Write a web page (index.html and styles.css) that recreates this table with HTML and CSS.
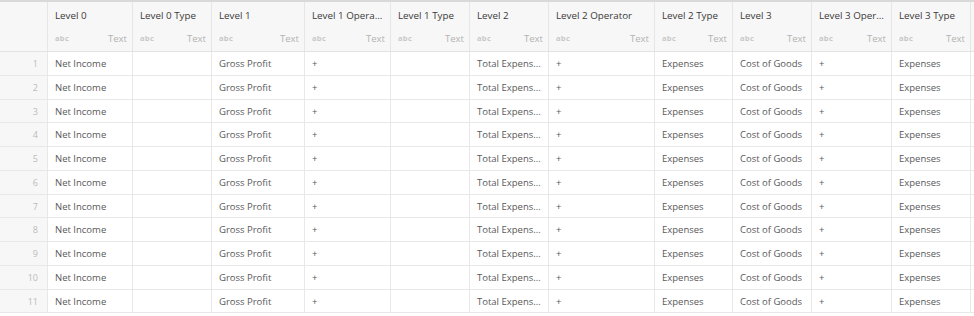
FILE: index.html
```html
<!DOCTYPE html>
<html>
<head>
<meta charset="utf-8">
<link rel="stylesheet" href="styles.css">
</head>
<body>
<div class="topbar"></div>
<div class="grid">
  <div class="head">
    <div class="hcell num"></div>
    <div class="hcell"><div class="title">Level 0</div><div class="sub"><span class="abc">abc</span><span class="type">Text</span></div></div>
    <div class="hcell"><div class="title">Level 0 Type</div><div class="sub"><span class="abc">abc</span><span class="type">Text</span></div></div>
    <div class="hcell"><div class="title">Level 1</div><div class="sub"><span class="abc">abc</span><span class="type">Text</span></div></div>
    <div class="hcell"><div class="title">Level 1 Operator</div><div class="sub"><span class="abc">abc</span><span class="type">Text</span></div></div>
    <div class="hcell"><div class="title">Level 1 Type</div><div class="sub"><span class="abc">abc</span><span class="type">Text</span></div></div>
    <div class="hcell"><div class="title">Level 2</div><div class="sub"><span class="abc">abc</span><span class="type">Text</span></div></div>
    <div class="hcell"><div class="title">Level 2 Operator</div><div class="sub"><span class="abc">abc</span><span class="type">Text</span></div></div>
    <div class="hcell"><div class="title">Level 2 Type</div><div class="sub"><span class="abc">abc</span><span class="type">Text</span></div></div>
    <div class="hcell"><div class="title">Level 3</div><div class="sub"><span class="abc">abc</span><span class="type">Text</span></div></div>
    <div class="hcell"><div class="title">Level 3 Operator</div><div class="sub"><span class="abc">abc</span><span class="type">Text</span></div></div>
    <div class="hcell"><div class="title">Level 3 Type</div><div class="sub"><span class="abc">abc</span><span class="type">Text</span></div></div>
  </div>
  <div id="body"></div>
</div>
<script>
  var body = document.getElementById('body');
  var vals = ['Net Income','','Gross Profit','+','','Total Expenses','+','Expenses','Cost of Goods','+','Expenses'];
  for (var i = 1; i <= 11; i++) {
    var r = document.createElement('div');
    r.className = 'row';
    var n = document.createElement('div');
    n.className = 'cell num';
    n.textContent = i;
    r.appendChild(n);
    vals.forEach(function (v) {
      var c = document.createElement('div');
      c.className = 'cell';
      c.textContent = v;
      r.appendChild(c);
    });
    body.appendChild(r);
  }
</script>
</body>
</html>
```

FILE: styles.css
```css
html, body {
  margin: 0;
  padding: 0;
  background: #fff;
  font-family: "Open Sans", "Liberation Sans", sans-serif;
  overflow: hidden;
}
.topbar {
  height: 2px;
  background: #d9d9d9;
}
.head, .row {
  display: grid;
  grid-template-columns: 48px 85px 79px 93px 86px 79px 79px 106px 78px 79px 80px 79px;
}
.head {
  background: #f7f7f7;
  border-bottom: 1px solid #e3e3e3;
}
.hcell {
  border-right: 1px solid #e6e6e6;
  height: 49px;
  padding: 0 5px 0 7px;
  box-sizing: border-box;
  overflow: hidden;
}
.title {
  font-size: 9.8px;
  color: #3a3a3a;
  height: 27px;
  line-height: 27px;
  white-space: nowrap;
  overflow: hidden;
  text-overflow: ellipsis;
}
.sub {
  display: flex;
  justify-content: space-between;
  align-items: center;
  height: 18px;
}
.abc {
  font-size: 7.5px;
  font-weight: 700;
  color: #c8c8c8;
  letter-spacing: 0.3px;
}
.type {
  font-size: 9.6px;
  color: #b3b3b3;
}
.row {
  height: 23.75px;
  box-sizing: border-box;
  border-bottom: 1px solid #e8e8e8;
}
.cell {
  border-right: 1px solid #e8e8e8;
  font-size: 9.5px;
  color: #595959;
  padding: 1px 5px 0 7px;
  line-height: 22px;
  white-space: nowrap;
  overflow: hidden;
  text-overflow: ellipsis;
}
.cell.num, .hcell.num {
  background: #f7f7f7;
}
.cell.num {
  text-align: right;
  color: #bbb;
  font-size: 9px;
  padding: 1px 9px 0 0;
}
```
